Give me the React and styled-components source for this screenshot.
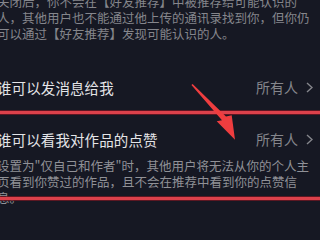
import React from 'react'
import styled, { createGlobalStyle } from 'styled-components'

const GlobalStyle = createGlobalStyle`
  html, body {
    margin: 0;
    padding: 0;
    background: #161823;
  }
  body {
    font-family: "Noto Sans CJK SC", "Noto Sans", sans-serif;
  }
`

const Screen = styled.div`
  position: relative;
  width: 320px;
  height: 240px;
  overflow: hidden;
  background: #161823;
`

const Content = styled.div`
  margin-left: -3px;
  padding-right: 7px;
  display: flex;
  flex-direction: column;
`

const Note = styled.p`
  margin: ${props => props.top || 0}px 0 0;
  font-size: 12.5px;
  line-height: 16px;
  color: ${props => props.light ? '#909197' : '#85868c'};
  white-space: nowrap;
`

const Row = styled.div`
  display: flex;
  justify-content: space-between;
  align-items: center;
  height: 20px;
  margin-top: ${props => props.top}px;
`

const Title = styled.span`
  font-size: 14.5px;
  color: #e4e4e7;
  letter-spacing: 0.1px;
`

const Value = styled.span`
  display: flex;
  align-items: center;
  gap: 8px;
  font-size: 14px;
  color: #85868c;
`

const Marker = styled.div`
  position: absolute;
  left: -10px;
  right: -10px;
  top: 111px;
  height: 89px;
  box-sizing: border-box;
  border: 3px solid #dc414b;
  box-shadow: 0 0 0 1px rgba(110, 24, 34, 0.8), inset 0 0 0 1px rgba(110, 24, 34, 0.8);
  pointer-events: none;
`

const Pointer = styled.svg`
  position: absolute;
  left: 0;
  top: 0;
  width: 320px;
  height: 240px;
  pointer-events: none;
`

const Chevron = () => (
  <svg width='7' height='11' viewBox='0 0 7 11'>
    <polyline points='1,1 6,5.5 1,10' fill='none' stroke='#85868c' strokeWidth='1.4' />
  </svg>
)

const Setting = ({ title, top }) => (
  <Row top={top}>
    <Title>{title}</Title>
    <Value>
      所有人
      <Chevron />
    </Value>
  </Row>
)

const App = () => (
  <Screen lang='zh-CN'>
    <GlobalStyle />
    <Content>
      <Note top={-6}>
        关闭后，你不会在【好友推荐】中被推荐给可能认识的<br />
        人，其他用户也不能通过他上传的通讯录找到你，但你仍<br />
        可以通过【好友推荐】发现可能认识的人。
      </Note>
      <Setting title='谁可以发消息给我' top={35} />
      <Setting title='谁可以看我对作品的点赞' top={32} />
      <Note top={9} light>
        设置为"仅自己和作者"时，其他用户将无法从你的个人主<br />
        页看到你赞过的作品，且不会在推荐中看到你的点赞信<br />
        息。
      </Note>
    </Content>
    <Marker />
    <Pointer viewBox='0 0 320 240'>
      <polygon
        points='192.6,84 226,116.4 231.7,115.3 235,139.7 216.7,121.3 222,120.2 191.4,85'
        fill='#ee3d3f'
      />
    </Pointer>
  </Screen>
)

export default App
